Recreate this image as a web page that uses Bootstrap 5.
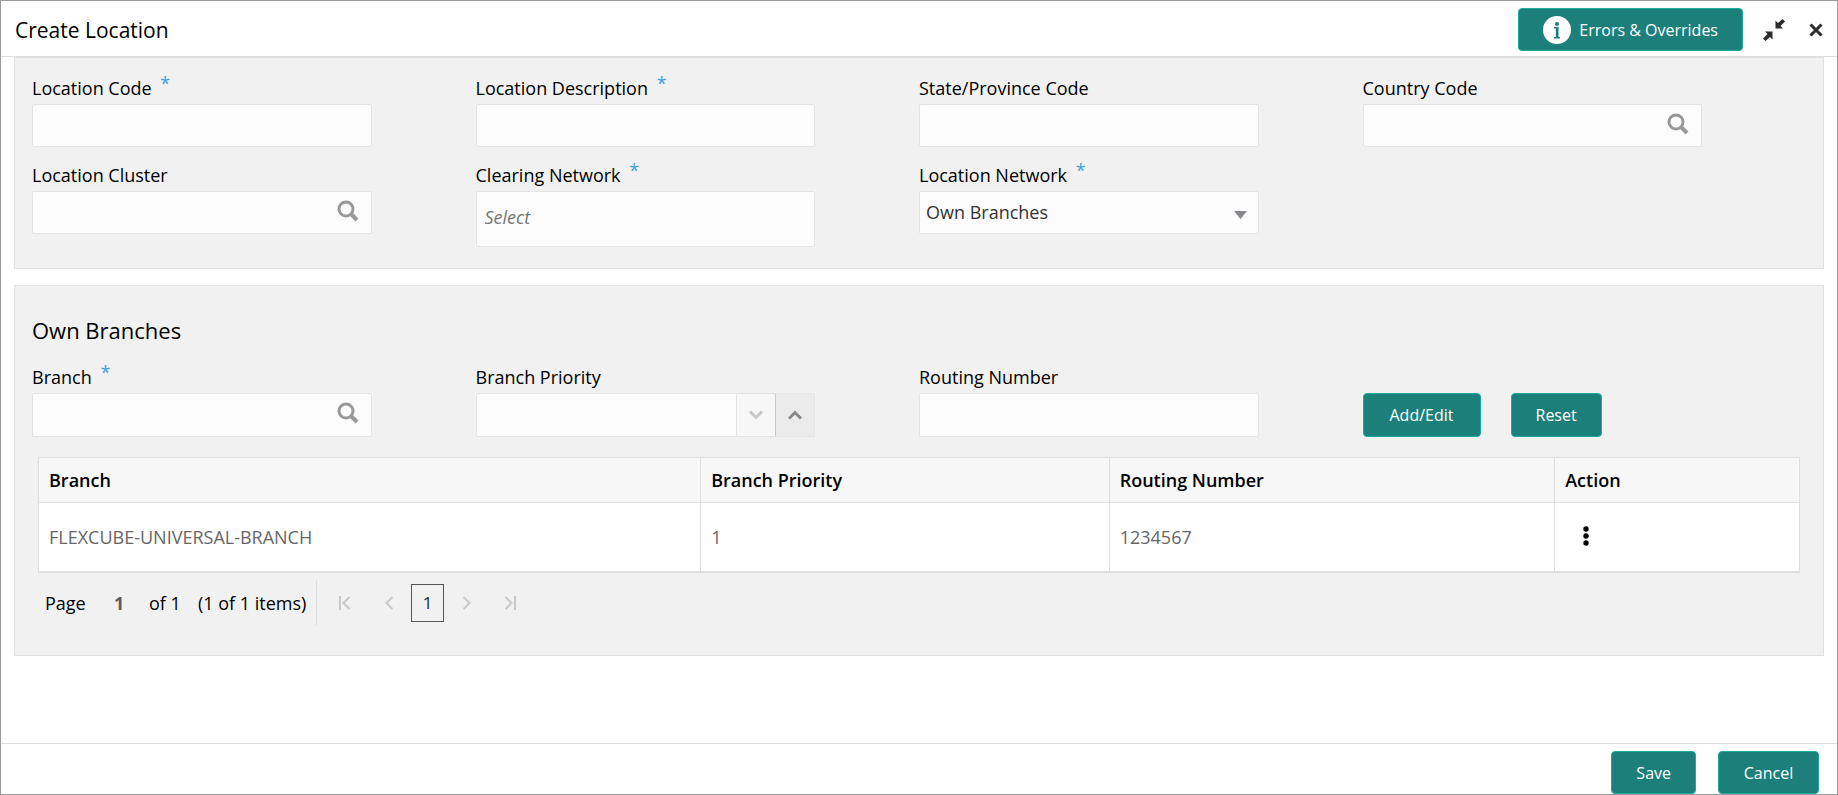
<!DOCTYPE html>
<html lang="en">
<head>
<meta charset="utf-8">
<meta name="viewport" content="width=device-width, initial-scale=1">
<title>Create Location</title>
<link href="https://cdn.jsdelivr.net/npm/bootstrap@5.3.0/dist/css/bootstrap.min.css" rel="stylesheet">
<style>
  body { font-family: "Open Sans", "Noto Sans", sans-serif; font-size: 18px; line-height: 24px; color: #000; background: #fff; }
  .dialog-frame { min-height: 100vh; border: 1px solid #9b9b9b; }
  .dialog-head { height: 56px; padding: 2px 14px 0; border-bottom: 1px solid #dcdfe2; }
  .dialog-title { font-size: 21px; line-height: 32px; font-weight: 400; margin: 0; }
  .collapse-btn { margin-left: 20px; }
  .panel { margin: 0 13px; padding: 0 17px; background: #f1f1f1; border: 1px solid #dfe1e3; }
  .panel-main { padding-top: 18px; padding-bottom: 21px; margin-bottom: 16px; }
  .panel-branches { padding-top: 28px; padding-bottom: 29px; }
  .panel-title { font-size: 22px; line-height: 32px; font-weight: 400; margin: 0 0 19px; }
  .field-cell { padding-right: 104px; }
  .field-cell label { display: block; margin-bottom: 4px; white-space: nowrap; }
  .req { color: #3fa0dc; line-height: 0; margin-left: 4px; vertical-align: 5px; }
  .field-box, .field-box:focus { height: 43px; padding: 0 8px; font-size: 18px; color: #333; background: #fcfcfc; border: 1px solid #e4e4e4; border-radius: 2px; box-shadow: none; }
  .field-select, .field-select:focus { padding: 0 7px 0 6px; background-image: none; }
  .field-multi, .field-multi:focus { height: 56px; padding-bottom: 4px; }
  .field-multi::placeholder { color: #757575; font-style: italic; opacity: 1; }
  .over-icon { position: absolute; right: 13px; top: 9px; padding: 0; border: 0; background: none; line-height: 0; }
  .over-caret { position: absolute; right: 12px; top: 20px; pointer-events: none; }
  .panel-branches .field-box, .btn-row .btn { height: 44px; }
  .spin { width: 39px; padding: 0; background: #f7f7f7; border: 1px solid #e4e4e4; border-left: 0; line-height: 0; }
  .spin-down { border-right-color: #c9c9c9; }
  .spin-up { background: #ebebeb; border-radius: 0 2px 2px 0; }
  .btn-teal, .btn-teal:hover { height: 43px; padding: 0 24px; font-size: 16px; color: #fff; background: #1c7f7a; border: 1px solid #1aab9c; border-radius: 4px; }
  .btn-add { min-width: 118px; }
  .btn-cancel { min-width: 101px; }
  .btn-row { gap: 30px; }
  .icon-plain { padding: 0; border: 0; background: none; line-height: 0; }
  .table-holder { margin: 20px 6px 0; }
  .branch-table { margin: 0; table-layout: fixed; border: 1px solid #dfdfdf; border-bottom-width: 2px; }
  .branch-table th, .branch-table td { padding: 0 10px; border: 1px solid #dfdfdf; vertical-align: middle; }
  .branch-table th { height: 45px; font-weight: 600; color: #000; background: #f7f7f7; }
  .branch-table td { height: 69px; color: #666; background: #fff; }
  .w-branch { width: 37.6%; }
  .w-prio { width: 23.2%; }
  .w-route { width: 25.3%; }
  .kebab { margin-left: 18px; padding-bottom: 6px; }
  .pager { margin-left: 13px; margin-top: 7px; height: 46px; }
  .pager-page { width: 69px; }
  .pager-cur { width: 35px; font-weight: 700; color: #5c5c66; }
  .pager-of { width: 49px; }
  .pager-items { height: 46px; width: 119px; line-height: 46px; border-right: 1px solid #dfdfdf; white-space: nowrap; }
  .pager-arrows { margin-left: 6px; }
  .pager-btn { width: 44px; height: 38px; }
  .pager-box { width: 33px; height: 38px; border: 1px solid #555; font-size: 17px; color: #2b2b4a; text-decoration: none; }
  .dialog-foot { height: 51px; padding: 7px 18px 0; border-top: 1px solid #dfdfdf; gap: 22px; }
</style>
<script src="https://cdn.jsdelivr.net/npm/bootstrap@5.3.0/dist/js/bootstrap.bundle.min.js"></script>
</head>
<body>
<svg class="d-none" aria-hidden="true">
  <symbol id="lens" viewBox="0 0 22 22"><circle cx="9" cy="9" r="7" fill="none" stroke="#999" stroke-width="3"/><path d="M14 14l6 6" stroke="#999" stroke-width="4"/></symbol>
</svg>
<div class="dialog-frame d-flex flex-column">
  <header class="dialog-head d-flex align-items-center">
    <h1 class="dialog-title me-auto">Create Location</h1>
    <button type="button" class="btn btn-teal d-flex align-items-center gap-2">
      <svg width="28" height="28" viewBox="0 0 28 28"><circle cx="14" cy="14" r="14" fill="#fff"/><circle cx="14" cy="8" r="2" fill="#1c7f7a"/><path d="M11 11h4.500v10h1.500v1.500h-6V21h1.800v-8.500h-1.800z" fill="#1c7f7a"/></svg>
      <span>Errors &amp; Overrides</span>
    </button>
    <button type="button" class="icon-plain collapse-btn" aria-label="Collapse">
      <svg width="22" height="22" viewBox="0 0 22 22" fill="#2b2b30"><path d="M12.500 9.500V1.500l2.500 2.500 4.500-4 2.500 2.500-4.500 4.500 2.500 2.500zM9.500 12.500v8l-2.500-2.500-4.500 4-2.500-2.500 4.500-4.500-2.500-2.500z"/></svg>
    </button>
    <button type="button" class="icon-plain ms-4" aria-label="Close">
      <svg width="14" height="14" viewBox="0 0 14 14"><path d="M1.500 1.500l11 11M12.500 1.500l-11 11" stroke="#2b2b30" stroke-width="3"/></svg>
    </button>
  </header>

  <main class="flex-grow-1">
    <section class="panel panel-main">
      <div class="row g-0 mb-3">
        <div class="col-3 field-cell">
          <label for="locCode">Location Code <span class="req">*</span></label>
          <input id="locCode" type="text" class="form-control field-box">
        </div>
        <div class="col-3 field-cell">
          <label for="locDesc">Location Description <span class="req">*</span></label>
          <input id="locDesc" type="text" class="form-control field-box">
        </div>
        <div class="col-3 field-cell">
          <label for="stateCode">State/Province Code</label>
          <input id="stateCode" type="text" class="form-control field-box">
        </div>
        <div class="col-3 field-cell">
          <label for="countryCode">Country Code</label>
          <div class="position-relative">
            <input id="countryCode" type="text" class="form-control field-box">
            <button type="button" class="over-icon" aria-label="Search country"><svg width="22" height="22"><use href="#lens"/></svg></button>
          </div>
        </div>
      </div>
      <div class="row g-0">
        <div class="col-3 field-cell">
          <label for="locCluster">Location Cluster</label>
          <div class="position-relative">
            <input id="locCluster" type="text" class="form-control field-box">
            <button type="button" class="over-icon" aria-label="Search cluster"><svg width="22" height="22"><use href="#lens"/></svg></button>
          </div>
        </div>
        <div class="col-3 field-cell">
          <label for="clearNet">Clearing Network <span class="req">*</span></label>
          <input id="clearNet" type="text" class="form-control field-box field-multi" placeholder="Select">
        </div>
        <div class="col-3 field-cell">
          <label for="locNet">Location Network <span class="req">*</span></label>
          <div class="position-relative">
            <select id="locNet" class="form-select field-box field-select"><option>Own Branches</option></select>
            <svg class="over-caret" width="13" height="8" viewBox="0 0 13 8"><path d="M0 0h13L6.500 8z" fill="#85878b"/></svg>
          </div>
        </div>
      </div>
    </section>

    <section class="panel panel-branches">
      <h2 class="panel-title">Own Branches</h2>
      <div class="row g-0 align-items-end">
        <div class="col-3 field-cell">
          <label for="branch">Branch <span class="req">*</span></label>
          <div class="position-relative">
            <input id="branch" type="text" class="form-control field-box">
            <button type="button" class="over-icon" aria-label="Search branch"><svg width="22" height="22"><use href="#lens"/></svg></button>
          </div>
        </div>
        <div class="col-3 field-cell">
          <label for="priority">Branch Priority</label>
          <div class="d-flex">
            <input id="priority" type="text" class="form-control field-box rounded-end-0">
            <button type="button" class="spin spin-down flex-shrink-0" aria-label="Decrease"><svg width="14" height="10" viewBox="0 0 14 10"><path d="M1 1.500l6 6 6-6" fill="none" stroke="#c6c8ca" stroke-width="3"/></svg></button>
            <button type="button" class="spin spin-up flex-shrink-0" aria-label="Increase"><svg width="14" height="10" viewBox="0 0 14 10"><path d="M1 8.500l6-6 6 6" fill="none" stroke="#85878b" stroke-width="3"/></svg></button>
          </div>
        </div>
        <div class="col-3 field-cell">
          <label for="routing">Routing Number</label>
          <input id="routing" type="text" class="form-control field-box">
        </div>
        <div class="col-3 btn-row d-flex">
          <button type="button" class="btn btn-teal btn-add">Add/Edit</button>
          <button type="button" class="btn btn-teal">Reset</button>
        </div>
      </div>

      <div class="table-holder">
        <table class="table branch-table">
          <colgroup><col class="w-branch"><col class="w-prio"><col class="w-route"><col></colgroup>
          <thead><tr><th scope="col">Branch</th><th scope="col">Branch Priority</th><th scope="col">Routing Number</th><th scope="col">Action</th></tr></thead>
          <tbody><tr>
            <td>FLEXCUBE-UNIVERSAL-BRANCH</td><td>1</td><td>1234567</td>
            <td><button type="button" class="icon-plain kebab" aria-label="Row actions"><svg width="6" height="20" viewBox="0 0 6 20"><circle cx="3" cy="3" r="2.700"/><circle cx="3" cy="10" r="2.700"/><circle cx="3" cy="17" r="2.700"/></svg></button></td>
          </tr></tbody>
        </table>
      </div>

      <nav class="pager d-flex align-items-center" aria-label="Pages">
        <span class="pager-page">Page</span>
        <span class="pager-cur">1</span>
        <span class="pager-of">of 1</span>
        <span class="pager-items">(1 of 1 items)</span>
        <span class="pager-arrows d-flex align-items-center">
          <button type="button" class="icon-plain pager-btn" disabled aria-label="First"><svg width="12" height="14" viewBox="0 0 12 14" fill="none" stroke="#c8c8c8" stroke-width="2"><path d="M1 0v14M10.500 1L4.500 7l6 6"/></svg></button>
          <button type="button" class="icon-plain pager-btn" disabled aria-label="Previous"><svg width="9" height="14" viewBox="0 0 9 14" fill="none" stroke="#c8c8c8" stroke-width="2"><path d="M7.500 1l-6 6 6 6"/></svg></button>
          <a href="#" class="pager-box d-flex align-items-center justify-content-center">1</a>
          <button type="button" class="icon-plain pager-btn" disabled aria-label="Next"><svg width="9" height="14" viewBox="0 0 9 14" fill="none" stroke="#c8c8c8" stroke-width="2"><path d="M1.500 1l6 6-6 6"/></svg></button>
          <button type="button" class="icon-plain pager-btn" disabled aria-label="Last"><svg width="12" height="14" viewBox="0 0 12 14" fill="none" stroke="#c8c8c8" stroke-width="2"><path d="M1.500 1l6 6-6 6M11 0v14"/></svg></button>
        </span>
      </nav>
    </section>
  </main>

  <footer class="dialog-foot d-flex justify-content-end">
    <button type="button" class="btn btn-teal">Save</button>
    <button type="button" class="btn btn-teal btn-cancel">Cancel</button>
  </footer>
</div>
</body>
</html>
